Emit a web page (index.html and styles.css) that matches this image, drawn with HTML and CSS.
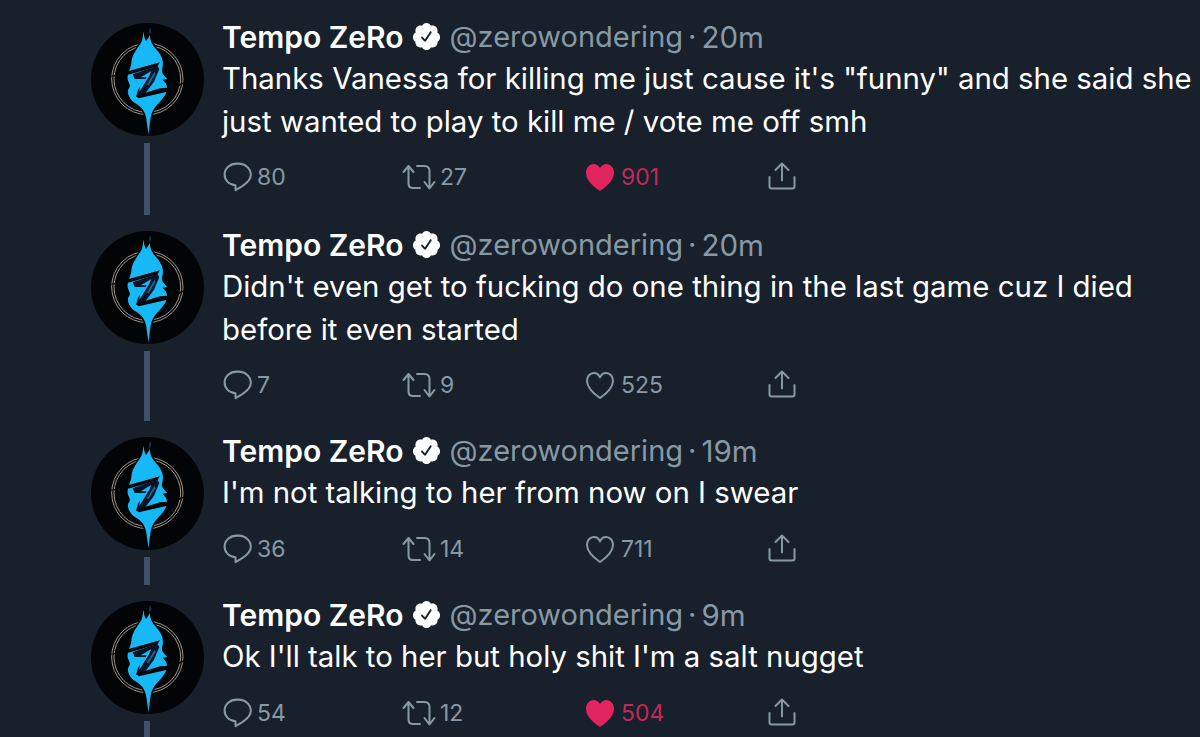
FILE: index.html
```html
<!DOCTYPE html>
<html lang="en">
<head>
<meta charset="utf-8">
<title>Tempo ZeRo thread</title>
<link rel="stylesheet" href="styles.css">
</head>
<body>
<svg class="defs" width="0" height="0" aria-hidden="true">
  <defs>
    <symbol id="avatar" viewBox="33 40 339 339">
      <circle cx="202.500" cy="209.500" r="169.500" fill="#030405"/>
      <g fill="none" stroke="#a2968a" stroke-width="3">
        <circle cx="202" cy="208" r="107"/>
        <circle cx="202" cy="208" r="100"/>
      </g>
      <path fill="#16b8f6" stroke="#030405" stroke-width="9" paint-order="stroke" d="M210 52C213 70 210 80 198 94C193 84 191 76 192 66C187 76 190 90 180 104C170 120 156 135 154 160C152 178 141 190 143 210C147 222 153 226 147 236C139 246 146 264 160 277C177 287 192 296 198 322C201 340 203 358 206 374C208 352 210 332 214 314C220 296 232 284 245 270C258 255 266 238 258 222L248 210L262 208C250 196 243 190 247 176C252 158 248 140 228 118C216 104 206 92 210 52Z"/>
      <path fill="#030405" d="M82 202L240 158L232 170L150 194L120 198Z"/>
      <path fill="#061225" d="M158 194L232 168L238 178L222 216L192 256L168 262L174 240L198 208L164 208Z"/>
      <path fill="#030405" d="M168 258L240 236L262 234L332 212L262 246L176 266Z"/>
      <path fill="#16b8f6" d="M182 203L214 184L208 198L186 234L178 246L180 230L200 203Z"/>
      <path fill="#0a6fa0" d="M200 225L224 186L226 194L206 226Z"/>
    </symbol>
    <symbol id="badge" viewBox="0 0 24 24">
      <path fill="#fff" d="M22.500 12.500c0-1.580-.875-2.950-2.148-3.600.154-.435.238-.905.238-1.400 0-2.210-1.710-3.998-3.818-3.998-.470 0-.920.084-1.336.250C14.818 2.415 13.510 1.500 12 1.500s-2.816.917-3.437 2.250c-.415-.165-.866-.250-1.336-.250-2.110 0-3.818 1.790-3.818 4 0 .494.083.964.237 1.400-1.272.650-2.147 2.018-2.147 3.600 0 1.495.782 2.798 1.942 3.486-.020.170-.032.340-.032.514 0 2.210 1.708 4 3.818 4 .470 0 .920-.086 1.335-.250.620 1.334 1.926 2.250 3.437 2.250 1.512 0 2.818-.916 3.437-2.250.415.163.865.248 1.336.248 2.110 0 3.818-1.790 3.818-4 0-.174-.012-.344-.033-.513 1.158-.687 1.943-1.990 1.943-3.484zm-6.616-3.334l-4.334 6.500c-.145.217-.382.334-.625.334-.143 0-.288-.040-.416-.126l-.115-.094-2.415-2.415c-.293-.293-.293-.768 0-1.060s.768-.294 1.060 0l1.770 1.767 3.825-5.740c.230-.345.696-.436 1.040-.207.346.230.440.696.210 1.040z"/>
    </symbol>
    <symbol id="reply" viewBox="0 0 28 28">
      <path fill="none" stroke="currentColor" stroke-width="1.900" stroke-linejoin="round" d="M13 1.500h1.500C21 1.500 26 6.300 26 12c0 5-4 8-8 10.500l-6.300 3.700v-4.400C5.500 21.300 1.500 17 1.500 11.700 1.500 6 6.500 1.500 13 1.500z"/>
    </symbol>
    <symbol id="retweet" viewBox="0 0 34 26">
      <path fill="none" stroke="currentColor" stroke-width="2" stroke-linecap="round" stroke-linejoin="round" d="M1.500 8L6.500 2L11.500 8M6.500 2V19.500C6.500 22 8 24 11 24H18M15 2H22.500C25.500 2 27.500 4 27.500 7V24M22.500 18L27.500 24.500L32.500 18"/>
    </symbol>
    <symbol id="heart-fill" viewBox="0 0 28 27">
      <path fill="#e0245e" d="M14 27C9 23.500 0 17.500 0 8.500 0 3.500 3.500 0 7.500 0 10.500 0 12.800 1.700 14 4.200 15.200 1.700 17.500 0 20.500 0 24.500 0 28 3.500 28 8.500 28 17.500 19 23.500 14 27z"/>
    </symbol>
    <symbol id="heart-line" viewBox="0 0 28 27">
      <path fill="none" stroke="currentColor" stroke-width="2" stroke-linejoin="round" d="M14 26C9.500 22.800 1 17 1 8.700 1 4.500 4 1 7.800 1 10.600 1 13 2.800 14 5.500 15 2.800 17.400 1 20.200 1 24 1 27 4.500 27 8.700 27 17 18.500 22.800 14 26z"/>
    </symbol>
    <symbol id="share" viewBox="0 0 28 28">
      <path fill="none" stroke="currentColor" stroke-width="2" stroke-linecap="round" stroke-linejoin="round" d="M14 1.500V18.500M7.500 8L14 1.500L20.500 8M1.500 15V24.500C1.500 25.800 2.300 26.500 3.500 26.500H24.500C25.700 26.500 26.500 25.800 26.500 24.500V15"/>
    </symbol>
  </defs>
</svg>

<main class="thread">
  <article class="tweet tweet-first">
    <div class="side">
      <svg class="avatar"><use href="#avatar"/></svg>
      <div class="line"></div>
    </div>
    <div class="body">
      <header class="head"><span class="name">Tempo ZeRo</span><svg class="badge"><use href="#badge"/></svg><span class="handle">@zerowondering</span><span class="dot">·</span><span class="time">20m</span></header>
      <p class="text">Thanks Vanessa for killing me just cause it's "funny" and she said she just wanted to play to kill me / vote me off smh</p>
      <footer class="actions">
        <div class="act"><svg class="ico-reply"><use href="#reply"/></svg><span>80</span></div>
        <div class="act act-rt"><svg class="ico-rt"><use href="#retweet"/></svg><span>27</span></div>
        <div class="act liked"><svg class="ico-heart"><use href="#heart-fill"/></svg><span>901</span></div>
        <div class="act"><svg class="ico-share"><use href="#share"/></svg></div>
      </footer>
    </div>
  </article>

  <article class="tweet tweet-second">
    <div class="side">
      <svg class="avatar"><use href="#avatar"/></svg>
      <div class="line"></div>
    </div>
    <div class="body">
      <header class="head"><span class="name">Tempo ZeRo</span><svg class="badge"><use href="#badge"/></svg><span class="handle">@zerowondering</span><span class="dot">·</span><span class="time">20m</span></header>
      <p class="text">Didn't even get to fucking do one thing in the last game cuz I died before it even started</p>
      <footer class="actions">
        <div class="act"><svg class="ico-reply"><use href="#reply"/></svg><span>7</span></div>
        <div class="act act-rt"><svg class="ico-rt"><use href="#retweet"/></svg><span>9</span></div>
        <div class="act"><svg class="ico-heart"><use href="#heart-line"/></svg><span>525</span></div>
        <div class="act"><svg class="ico-share"><use href="#share"/></svg></div>
      </footer>
    </div>
  </article>

  <article class="tweet tweet-one">
    <div class="side">
      <svg class="avatar"><use href="#avatar"/></svg>
      <div class="line"></div>
    </div>
    <div class="body">
      <header class="head"><span class="name">Tempo ZeRo</span><svg class="badge"><use href="#badge"/></svg><span class="handle">@zerowondering</span><span class="dot">·</span><span class="time">19m</span></header>
      <p class="text">I'm not talking to her from now on I swear</p>
      <footer class="actions">
        <div class="act"><svg class="ico-reply"><use href="#reply"/></svg><span>36</span></div>
        <div class="act act-rt"><svg class="ico-rt"><use href="#retweet"/></svg><span>14</span></div>
        <div class="act"><svg class="ico-heart"><use href="#heart-line"/></svg><span>711</span></div>
        <div class="act"><svg class="ico-share"><use href="#share"/></svg></div>
      </footer>
    </div>
  </article>

  <article class="tweet tweet-one">
    <div class="side">
      <svg class="avatar"><use href="#avatar"/></svg>
      <div class="line"></div>
    </div>
    <div class="body">
      <header class="head"><span class="name">Tempo ZeRo</span><svg class="badge"><use href="#badge"/></svg><span class="handle">@zerowondering</span><span class="dot">·</span><span class="time">9m</span></header>
      <p class="text">Ok I'll talk to her but holy shit I'm a salt nugget</p>
      <footer class="actions">
        <div class="act"><svg class="ico-reply"><use href="#reply"/></svg><span>54</span></div>
        <div class="act act-rt"><svg class="ico-rt"><use href="#retweet"/></svg><span>12</span></div>
        <div class="act liked"><svg class="ico-heart"><use href="#heart-fill"/></svg><span>504</span></div>
        <div class="act"><svg class="ico-share"><use href="#share"/></svg></div>
      </footer>
    </div>
  </article>
</main>
</body>
</html>
```

FILE: styles.css
```css
html, body {
  margin: 0;
  padding: 0;
  height: 100%;
  overflow: hidden;
  background: #17202b;
}

.defs {
  display: block;
  height: 0;
}

.thread {
  display: flex;
  flex-direction: column;
  padding-top: 18px;
  color: #fff;
  font-family: Inter, "Liberation Sans", sans-serif;
}

.tweet {
  display: grid;
  grid-template-columns: 222px 1fr;
}

.tweet-first {
  height: 208px;
}

.tweet-second {
  height: 206px;
}

.tweet-one {
  height: 164px;
}

.side {
  display: flex;
  flex-direction: column;
  align-items: center;
  padding-left: 73px;
  padding-top: 5px;
  box-sizing: border-box;
  width: 222px;
}

.avatar {
  flex: none;
  width: 113px;
  height: 113px;
  display: block;
}

.line {
  flex: 1;
  width: 6px;
  margin-top: 7px;
  margin-bottom: 11px;
  margin-left: -1px;
  background: #3f5268;
}

.body {
  min-width: 0;
}

.head {
  display: flex;
  align-items: center;
  height: 37px;
  font-size: 29px;
  white-space: nowrap;
}

.name {
  font-size: 30px;
  font-weight: 600;
}

.badge {
  width: 31px;
  height: 31px;
  margin: 0 8px 0 7px;
  flex: none;
}

.handle,
.dot,
.time {
  color: #8899a6;
}

.dot {
  margin: 0 5px;
}

.time {
  font-size: 29.500px;
}

.text {
  margin: 0;
  padding-top: 2px;
  font-size: 29.400px;
  line-height: 43px;
  width: 975px;
}

.actions {
  display: grid;
  grid-template-columns: 180px 184px 182px auto;
  margin-top: 21px;
  color: #8899a6;
  font-size: 23px;
}

.tweet-first .actions,
.tweet-second .actions {
  margin-top: 20px;
}

.act {
  display: flex;
  align-items: center;
  gap: 5px;
  height: 28px;
}

.act-rt {
  gap: 4px;
}

.liked {
  color: #c2295b;
}

.ico-reply {
  width: 30px;
  height: 30px;
  margin-left: 1px;
  margin-right: -1px;
  flex: none;
}

.ico-rt {
  width: 34px;
  height: 26px;
}

.ico-heart {
  width: 28px;
  height: 27px;
  margin-right: 2px;
}

.ico-share {
  width: 28px;
  height: 28px;
  margin-bottom: 3px;
}
```
